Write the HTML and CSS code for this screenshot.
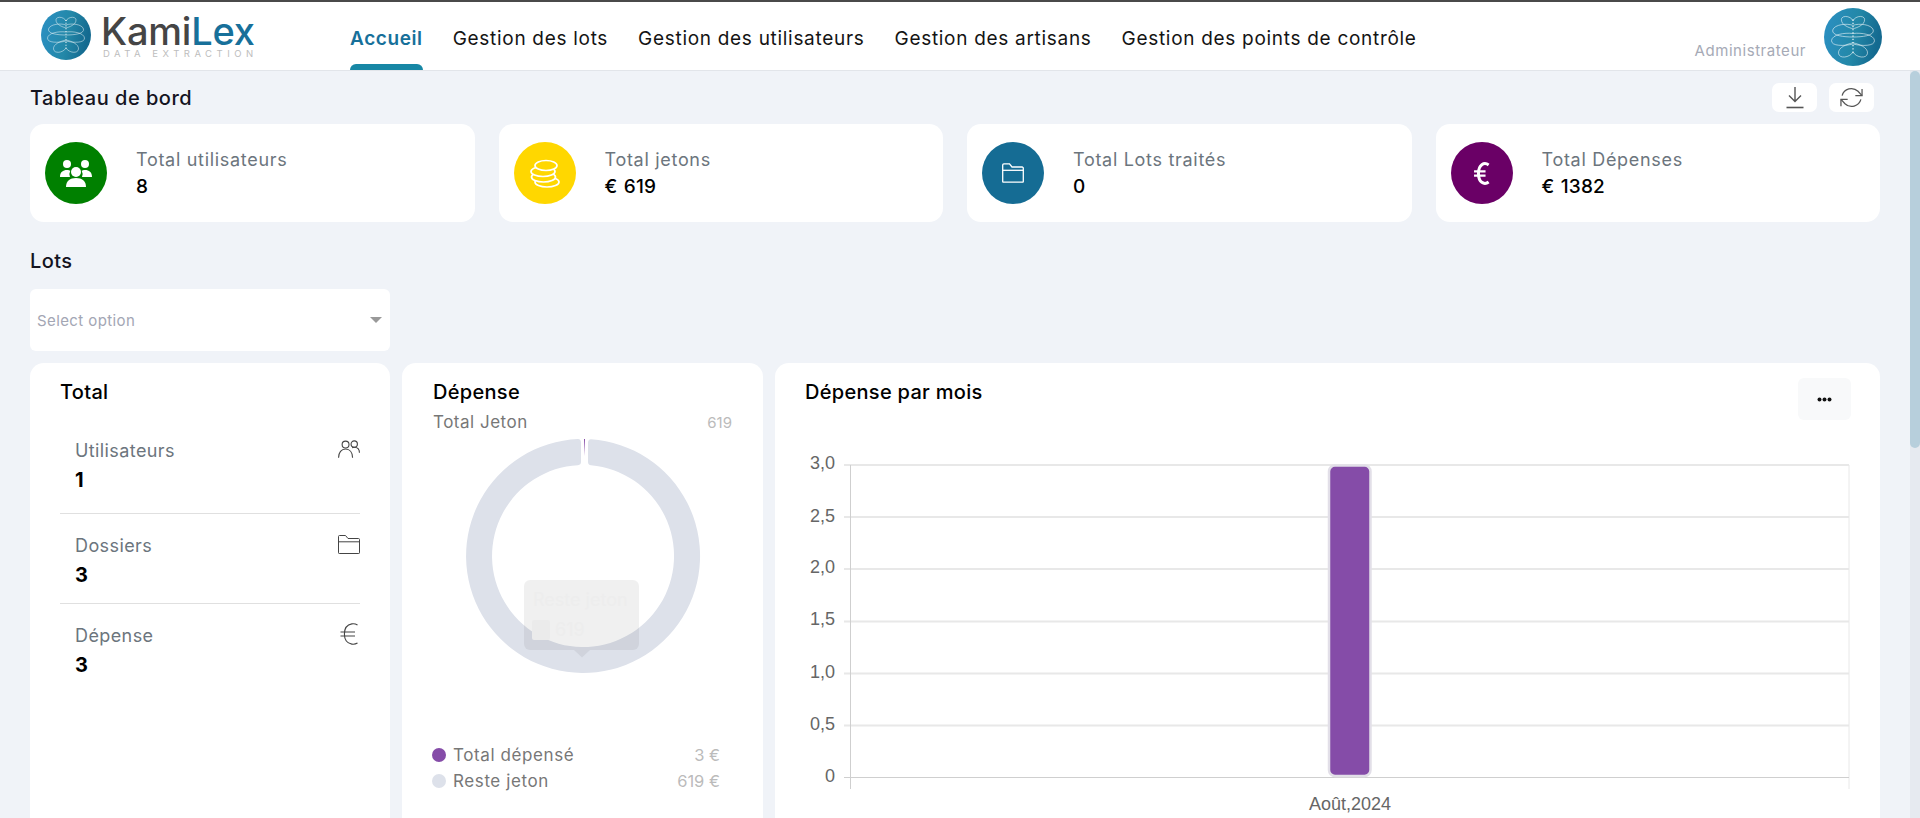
FILE: index.html
```html
<!DOCTYPE html>
<html lang="fr">
<head>
<meta charset="utf-8">
<title>KamiLex - Tableau de bord</title>
<link rel="stylesheet" href="styles.css">
</head>
<body>
<svg class="defs" width="0" height="0" aria-hidden="true">
  <defs>
    <linearGradient id="brainBg" x1="0" y1="0" x2="1" y2="0.2">
      <stop offset="0" stop-color="#2c90c4"/>
      <stop offset="0.6" stop-color="#2388a8"/>
      <stop offset="1" stop-color="#146a90"/>
    </linearGradient>
    <linearGradient id="tickFade" gradientUnits="userSpaceOnUse" x1="0" y1="439" x2="0" y2="456">
      <stop offset="0" stop-color="#854ca8"/>
      <stop offset="1" stop-color="#854ca8" stop-opacity="0"/>
    </linearGradient>
    <symbol id="brain" viewBox="0 0 100 100">
      <circle cx="50" cy="50" r="50" fill="url(#brainBg)"/>
      <g fill="none" stroke="#fff" stroke-opacity=".8" stroke-width="1.200">
        <path d="M50 22C46 13 30 12 30 20C30 30 44 34 50 36C56 34 70 30 70 20C70 12 54 13 50 22Z"/>
        <path d="M50 30C40 26 18 28 15 38C13 48 35 50 50 50C65 50 87 48 85 38C82 28 60 26 50 30Z"/>
        <path d="M50 44C35 42 14 46 13 56C12 66 35 66 50 62C65 66 88 66 87 56C86 46 65 42 50 44Z"/>
        <path d="M50 60C40 62 24 68 25 78C26 88 44 86 50 76C56 86 74 88 75 78C76 68 60 62 50 60Z"/>
        <path d="M50 20V80" stroke-width="2.400" stroke-dasharray="2 3.500"/>
      </g>
    </symbol>
  </defs>
</svg>

<header class="topbar">
  <a class="brand" href="#">
    <svg class="brand-mark"><use href="#brain"/></svg>
    <span class="brand-text">
      <span class="brand-name">Kami<span class="brand-accent">Lex</span></span>
      <span class="brand-sub">DATA EXTRACTION</span>
    </span>
  </a>
  <nav class="nav">
    <a class="nav-link is-active" href="#">Accueil</a>
    <a class="nav-link" href="#">Gestion des lots</a>
    <a class="nav-link" href="#">Gestion des utilisateurs</a>
    <a class="nav-link" href="#">Gestion des artisans</a>
    <a class="nav-link" href="#">Gestion des points de contrôle</a>
  </nav>
  <div class="user">
    <span class="user-role">Administrateur</span>
    <svg class="user-avatar"><use href="#brain"/></svg>
  </div>
</header>

<div class="shell">
  <main class="content">
    <div class="page-head">
      <h1 class="page-title">Tableau de bord</h1>
      <div class="tools">
        <button class="tool" type="button" aria-label="Télécharger">
          <svg width="20" height="23" viewBox="0 0 20 23" fill="none" stroke="#555" stroke-width="1.400"><path d="M10 1V15M4 9.500L10 15.500L16 9.500"/><path d="M1.500 21.500H18.500" stroke-width="1.600"/></svg>
        </button>
        <button class="tool" type="button" aria-label="Actualiser">
          <svg width="23" height="23" viewBox="0 0 24 24" fill="none" stroke="#555" stroke-width="1.300"><path d="M23 3V10H16"/><path d="M1 21V14H8"/><path d="M2.200 10A10 10 0 0 1 18.800 5.500L23 10"/><path d="M1 14L5.200 18.500A10 10 0 0 0 21.800 14"/></svg>
        </button>
      </div>
    </div>

    <section class="stats">
      <article class="stat">
        <span class="stat-icon stat-green">
          <svg width="34" height="28" viewBox="0 0 34 28" fill="#fff"><circle cx="8" cy="5" r="4"/><circle cx="26" cy="5" r="4"/><path d="M1 18c0-5 3-7 7-7 1.500 0 2.500.3 3.300.800A7 7 0 0 0 11 18H1zM33 18c0-5-3-7-7-7-1.500 0-2.500.3-3.300.800A7 7 0 0 1 23 18h10z"/><circle cx="17" cy="13" r="5"/><path d="M7 28c0-6 4-9 10-9s10 3 10 9H7z"/></svg>
        </span>
        <div class="stat-body"><p class="stat-label">Total utilisateurs</p><p class="stat-value">8</p></div>
      </article>
      <article class="stat">
        <span class="stat-icon stat-yellow">
          <svg width="30" height="29" viewBox="0 0 30 29" fill="#ffd700" stroke="#fff" stroke-width="1.700"><ellipse cx="17" cy="23" rx="12" ry="5"/><ellipse cx="13.500" cy="18" rx="12" ry="5"/><ellipse cx="13" cy="12.500" rx="12" ry="5"/><ellipse cx="16" cy="6.500" rx="11" ry="5"/></svg>
        </span>
        <div class="stat-body"><p class="stat-label">Total jetons</p><p class="stat-value">€ 619</p></div>
      </article>
      <article class="stat">
        <span class="stat-icon stat-blue">
          <svg width="22" height="20" viewBox="0 0 22 20" fill="none" stroke="#fff" stroke-width="1.300"><path d="M.7 18.500V2A1.200 1.200 0 0 1 1.900.8H7.500L10 4H20.100A1.200 1.200 0 0 1 21.300 5.200V18.500A.7.7 0 0 1 20.600 19.200H1.400A.7.7 0 0 1 .7 18.500Z"/><path d="M.7 7.300H21.300"/></svg>
        </span>
        <div class="stat-body"><p class="stat-label">Total Lots traités</p><p class="stat-value">0</p></div>
      </article>
      <article class="stat">
        <span class="stat-icon stat-purple">
          <svg width="16" height="23" viewBox="0 0 18 26" fill="none" stroke="#fff" stroke-width="3.400"><path d="M16.500 3.300C14 1.500 11 1.500 8.800 3C5.500 5.300 5 9 5 13s.5 7.700 3.800 10c2.200 1.500 5.200 1.500 7.700-.3"/><path d="M0 10.500H13M0 15.500H13" stroke-width="2.600"/></svg>
        </span>
        <div class="stat-body"><p class="stat-label">Total Dépenses</p><p class="stat-value">€ 1382</p></div>
      </article>
    </section>

    <h2 class="section-title">Lots</h2>
    <div class="select"><span class="select-text">Select option</span><span class="select-caret"></span></div>

    <section class="panels">
      <article class="panel panel-total">
        <h3 class="panel-title">Total</h3>
        <ul class="totals">
          <li class="total-item">
            <div><p class="total-label">Utilisateurs</p><p class="total-value">1</p></div>
            <svg class="total-icon" width="22" height="18" viewBox="0 0 16 13" fill="none" stroke="#444" stroke-width=".8"><circle cx="5.500" cy="3.300" r="2.500"/><path d="M.4 12.800C.4 9 2.500 6.500 5.500 6.500s5 2.500 5.100 6.300"/><circle cx="11.800" cy="2.900" r="2.300"/><path d="M10.300 5.500c.5-.2 1-.3 1.500-.3 2.200 0 3.800 1.500 3.800 4"/></svg>
          </li>
          <li class="total-item">
            <div><p class="total-label">Dossiers</p><p class="total-value">3</p></div>
            <svg class="total-icon" width="22" height="19" viewBox="0 0 22 19" fill="none" stroke="#444" stroke-width="1"><path d="M.5 17.800V1.500A1 1 0 0 1 1.500.5H7.500L10 3.500H20.500A1 1 0 0 1 21.500 4.500V17.800A.7.7 0 0 1 20.800 18.500H1.200A.7.7 0 0 1 .5 17.800Z"/><path d="M.5 6.800H21.500"/></svg>
          </li>
          <li class="total-item">
            <div><p class="total-label">Dépense</p><p class="total-value">3</p></div>
            <svg class="total-icon total-euro" width="18" height="22" viewBox="0 0 18 22" fill="none" stroke="#444" stroke-width="1.100"><path d="M17.500 2C15.600.9 13.700.6 11.800.9 6.800 1.800 4.400 6 4.400 11s2.400 9.200 7.400 10.100c1.900.3 3.800 0 5.700-1.100"/><path d="M.5 9H15M.5 13H15"/></svg>
          </li>
        </ul>
      </article>

      <article class="panel panel-spend">
        <h3 class="panel-title">Dépense</h3>
        <div class="spend-head"><span class="spend-name">Total Jeton</span><span class="spend-num">619</span></div>
        <svg class="donut" viewBox="433 434 300 240" width="300" height="240">
          <path class="donut-ring" d="M591 439.270A117 117 0 1 1 578 439.110Q581 439.300 581 442.500V462Q581 464.800 578 465.140A91 91 0 1 0 591 465.350Q588 465 588 462V442.500Q588 439.500 591 439.270Z"/>
          <path class="donut-tick" d="M584.500 439V456"/>
          <rect class="tip" x="524" y="580" width="115" height="70" rx="6"/>
          <path class="tip" d="M574 650H590L582 657.500Z"/>
          <text class="tip-text" x="533" y="606">Reste jeton</text>
          <rect class="tip-swatch" x="532" y="620" width="18" height="20" rx="2"/>
          <text class="tip-text" x="555" y="636">619</text>
        </svg>
        <ul class="legend">
          <li class="legend-row"><span class="dot dot-purple"></span><span class="legend-name">Total dépensé</span><span class="legend-num">3 €</span></li>
          <li class="legend-row"><span class="dot dot-grey"></span><span class="legend-name">Reste jeton</span><span class="legend-num">619 €</span></li>
        </ul>
      </article>

      <article class="panel panel-chart">
        <div class="chart-head">
          <h3 class="panel-title">Dépense par mois</h3>
          <button class="more" type="button" aria-label="Plus"><svg width="15" height="5" viewBox="0 0 15 5" fill="#111"><circle cx="2.500" cy="2.500" r="2"/><circle cx="7.500" cy="2.500" r="2"/><circle cx="12.500" cy="2.500" r="2"/></svg></button>
        </div>
        <svg class="chart" viewBox="775 440 1105 378" width="1105" height="378">
          <g class="grid">
            <path d="M844 465H1849M844 517H1849M844 569H1849M844 621.500H1849M844 673.500H1849M844 725.500H1849"/>
            <path d="M1849 465V789"/>
          </g>
          <path class="axis" d="M850.500 465V789M844 777.500H1849"/>
          <rect class="bar" x="1329" y="465.500" width="41.500" height="310.500" rx="6"/>
          <g class="tick-y">
            <text x="835" y="469">3,0</text>
            <text x="835" y="521.500">2,5</text>
            <text x="835" y="573">2,0</text>
            <text x="835" y="625">1,5</text>
            <text x="835" y="678">1,0</text>
            <text x="835" y="730">0,5</text>
            <text x="835" y="782">0</text>
          </g>
          <text class="tick-x" x="1350" y="810">Août,2024</text>
        </svg>
      </article>
    </section>
  </main>
  <div class="scrollbar"><span class="scrollbar-thumb"></span></div>
</div>
</body>
</html>
```
FILE: styles.css
```css
* { box-sizing: border-box; }
html, body { margin: 0; padding: 0; height: 818px; overflow: hidden; }
body {
  display: flex;
  flex-direction: column;
  background: #f0f3f8;
  font-family: Inter, "Noto Sans", "Liberation Sans", sans-serif;
  color: #000;
}
p, h1, h2, h3, ul { margin: 0; padding: 0; }
ul { list-style: none; }
a { text-decoration: none; color: inherit; }
button { border: 0; padding: 0; font: inherit; cursor: pointer; }
.defs { position: absolute; }

/* Top bar */
.topbar {
  flex: none;
  height: 71px;
  display: flex;
  align-items: stretch;
  background: #fff;
  border-top: 2px solid #4a4a4a;
  border-bottom: 1px solid #e2e5ea;
  padding-left: 41px;
}
.brand { display: flex; align-items: center; gap: 10px; width: 309px; padding-bottom: 3px; }
.brand-mark { width: 50px; height: 50px; flex: none; }
.brand-text { display: flex; flex-direction: column; }
.brand-name { font-size: 38px; line-height: 36px; letter-spacing: -.2px; color: #454545; font-weight: 500; margin-top: 2px; }
.brand-accent { color: #17709a; }
.brand-sub { font-size: 9.500px; line-height: 10px; letter-spacing: 4.500px; color: #bdbdbd; margin: 0 0 0 2px; white-space: nowrap; }
.nav { display: flex; gap: 30px; }
.nav-link {
  height: 68px;
  padding-top: 24px;
  font-size: 19px;
  line-height: 26px;
  color: #141414;
  white-space: nowrap;
  letter-spacing: .7px;
  position: relative;
}
.nav-link.is-active { color: #17709a; font-weight: 600; letter-spacing: .6px; }
.nav-link.is-active::after {
  content: "";
  position: absolute;
  left: 0; right: 0; bottom: 0;
  height: 6px;
  background: #1787a5;
  border-radius: 6px 6px 0 0;
}
.user { margin-left: auto; display: flex; align-items: flex-start; gap: 18px; padding-right: 38px; padding-top: 6px; }
.user-role { font-size: 15px; line-height: 22px; color: #a6aab6; margin-top: 32px; letter-spacing: .55px; }
.user-avatar { width: 58px; height: 58px; }

/* Shell */
.shell { flex: 1; min-height: 0; display: flex; }
.content { flex: 1; min-width: 0; padding: 12px 30px 0; overflow: hidden; }
.scrollbar { flex: none; width: 10px; background: #e6eaf0; }
.scrollbar-thumb { display: block; height: 377px; background: #b7cfdc; border-radius: 5px; }

.page-head { display: flex; justify-content: space-between; align-items: center; height: 29px; }
.page-title { font-size: 20px; font-weight: 500; line-height: 26px; color: #14141f; letter-spacing: .5px; }
.tools { display: flex; gap: 12px; margin-right: 6px; }
.tool { width: 45px; height: 29px; background: #fff; border-radius: 7px; display: flex; align-items: center; justify-content: center; }

/* Stat cards */
.stats { display: grid; grid-template-columns: repeat(4, 1fr); gap: 24px; margin-top: 12px; }
.stat { height: 98px; background: #fff; border-radius: 14px; display: flex; align-items: center; gap: 29px; padding-left: 15px; }
.stat-icon { width: 62px; height: 62px; border-radius: 50%; display: flex; align-items: center; justify-content: center; flex: none; }
.stat-green { background: #008000; }
.stat-yellow { background: #ffd700; }
.stat-blue { background: #156c94; }
.stat-purple { background: #6a0066; }
.stat-label { font-size: 18px; line-height: 24px; color: #6c757d; letter-spacing: .7px; }
.stat-value { font-size: 19px; line-height: 24px; font-weight: 500; margin-top: 3px; letter-spacing: .2px; word-spacing: 1px; }

/* Lots */
.section-title { font-size: 20px; font-weight: 500; line-height: 24px; margin-top: 27px; color: #14141f; letter-spacing: .4px; }
.select { width: 360px; height: 62px; margin-top: 16px; background: #fff; border-radius: 6px; display: flex; align-items: center; justify-content: space-between; padding: 0 8px 0 7px; }
.select-text { font-size: 15px; color: #a3a6b4; letter-spacing: .4px; }
.select-caret { width: 0; height: 0; border-left: 6px solid transparent; border-right: 6px solid transparent; border-top: 6px solid #999; }

/* Panels */
.panels { display: grid; grid-template-columns: 360px 361px 1fr; gap: 12px; margin-top: 12px; }
.panel { height: 520px; background: #fff; border-radius: 14px; }
.panel-title { font-size: 20px; font-weight: 500; line-height: 24px; letter-spacing: .3px; }

.panel-total { padding: 17px 30px 0; }
.totals { margin-top: 15px; }
.total-item { display: flex; justify-content: space-between; align-items: flex-start; padding: 20px 0 16px 15px; border-bottom: 1px solid #e0e0e0; }
.total-item:first-child { padding-bottom: 21px; }
.total-item:last-child { border-bottom: 0; padding-top: 20px; }
.total-label { font-size: 18px; line-height: 24px; color: #6c757d; letter-spacing: .4px; }
.total-value { font-size: 20px; line-height: 24px; font-weight: 700; margin-top: 5px; }
.total-icon { flex: none; margin-top: 1px; }
.total-euro { margin-right: 2px; margin-top: -1px; }

.panel-spend { padding: 17px 31px 0; }
.spend-head { display: flex; justify-content: space-between; align-items: center; margin-top: 6px; height: 24px; }
.spend-name { font-size: 17px; color: #777; letter-spacing: .5px; }
.spend-num { font-size: 15px; color: #bbb; }
.donut { display: block; margin-top: 0; overflow: visible; }
.donut-ring { fill: #dde1ea; }
.donut-tick { stroke: url(#tickFade); stroke-width: 1; }
.tip { fill: #000; fill-opacity: .06; }
.tip-text { font-size: 18px; fill: #ededed; }
.tip-swatch { fill: #ebebeb; }
.legend { margin-top: 68px; padding-right: 12px; margin-left: -1px; }
.legend-row { display: flex; align-items: center; height: 26px; font-size: 16.500px; }
.dot { width: 14px; height: 14px; border-radius: 50%; margin-right: 7px; }
.dot-purple { background: #854ca8; }
.dot-grey { background: #dde1ea; }
.legend-name { color: #777; letter-spacing: .6px; font-size: 17px; }
.legend-num { margin-left: auto; color: #bbb; }

.chart-head { display: flex; justify-content: space-between; align-items: flex-start; padding: 15px 29px 0 30px; height: 77px; }
.chart-head .panel-title { margin-top: 2px; }
.more { width: 53px; height: 42px; background: #f8f9fa; border-radius: 6px; display: flex; align-items: center; justify-content: center; }
.chart { display: block; }
.grid path { fill: none; stroke: #e8e8e8; stroke-width: 2; }
.grid path:last-child { stroke-width: 1; }
.axis { fill: none; stroke: #cfcfcf; stroke-width: 1; }
.bar { fill: #854ca8; stroke: #e2dfe8; stroke-width: 2.500; }
.tick-y text { font-family: "Liberation Sans", Arial, sans-serif; font-size: 18px; fill: #666; text-anchor: end; }
.tick-x { font-family: "Liberation Sans", Arial, sans-serif; font-size: 18px; fill: #666; text-anchor: middle; }
```
